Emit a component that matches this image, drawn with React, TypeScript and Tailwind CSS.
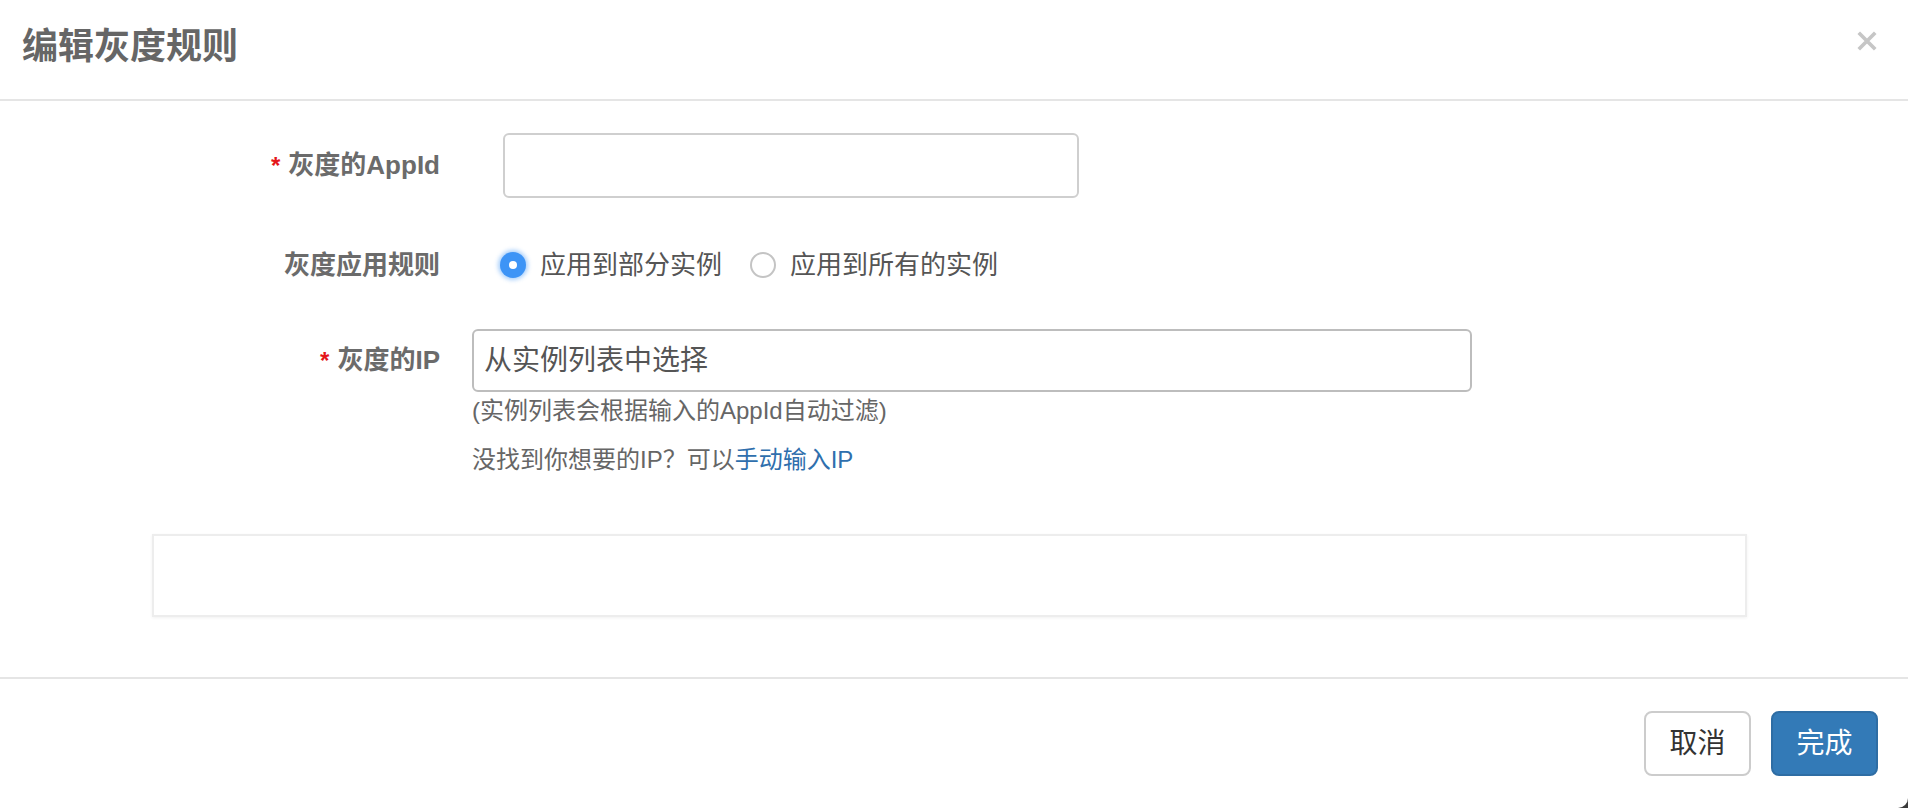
const FONT = "font-['Liberation_Sans','Noto_Sans_CJK_SC',sans-serif]";

function FieldLabel({ text, required }: { text: string; required?: boolean }) {
  return (
    <div className="flex w-[440px] shrink-0 items-center justify-end text-[26px] font-bold text-[#6b6b6b]">
      {required ? <span className="mr-[8px] text-[24px] text-[#e4161b]">*</span> : null}
      <span>{text}</span>
    </div>
  );
}

function Radio({ checked, label }: { checked?: boolean; label: string }) {
  return (
    <label className="flex items-center gap-[14px]">
      {checked ? (
        <span className="grid h-[26px] w-[26px] place-items-center rounded-full bg-[#3d94f6] shadow-[0_0_4px_2px_rgba(61,148,246,0.45)]">
          <span className="h-[8px] w-[8px] rounded-full bg-white" />
        </span>
      ) : (
        <span className="h-[26px] w-[26px] rounded-full border-2 border-[#c4c4c4] bg-white" />
      )}
      <span className="text-[26px] text-[#555]">{label}</span>
    </label>
  );
}

export default function App() {
  return (
    <div className={`h-[808px] w-[1908px] overflow-hidden bg-[#3a3a3a] ${FONT}`}>
      <div className="flex h-full w-full flex-col rounded-br-[10px] bg-white">
        {/* Header */}
        <header className="flex h-[101px] shrink-0 items-center justify-between border-b-2 border-[#e5e5e5] pl-[22px] pr-[30px]">
          <h1 className="pb-[6px] text-[36px] font-bold leading-none text-[#666]">编辑灰度规则</h1>
          <button className="mb-[18px] text-[#c6c6c6]" aria-label="关闭">
            <svg viewBox="0 0 24 24" className="h-[22px] w-[22px]" fill="none" stroke="currentColor" strokeWidth="4" strokeLinecap="butt">
              <path d="M3 3l18 18M21 3L3 21" />
            </svg>
          </button>
        </header>

        {/* Body */}
        <div className="flex h-[578px] shrink-0 flex-col border-b-2 border-[#e5e5e5]">
          <div className="mt-[32px] flex h-[65px] items-center">
            <FieldLabel text="灰度的AppId" required />
            <input className="ml-[63px] h-[65px] w-[576px] rounded-[6px] border-2 border-[#cfcfcf] bg-white px-[14px] text-[26px] outline-none" />
          </div>

          <div className="mt-[47px] flex h-[40px] items-center">
            <FieldLabel text="灰度应用规则" />
            <div className="ml-[60px] flex items-center gap-[28px]">
              <Radio checked label="应用到部分实例" />
              <Radio label="应用到所有的实例" />
            </div>
          </div>

          <div className="mt-[44px] flex items-start">
            <div className="flex h-[63px] items-center">
              <FieldLabel text="灰度的IP" required />
            </div>
            <div className="ml-[32px] flex flex-col">
              <input
                placeholder="从实例列表中选择"
                className="h-[63px] w-[1000px] rounded-[6px] border-2 border-[#bdbdbd] bg-white px-[10px] text-[28px] text-[#555] outline-none placeholder:text-[#555]"
              />
              <div className="mt-[3px] h-[32px] text-[24px] leading-[32px] text-[#666]">(实例列表会根据输入的AppId自动过滤)</div>
              <div className="mt-[17px] h-[32px] text-[24px] leading-[32px] text-[#666]">
                没找到你想要的IP？可以<a className="text-[#2f6fad]">手动输入IP</a>
              </div>
            </div>
          </div>

          <div className="ml-[152px] mt-[58px] h-[83px] w-[1595px] border-2 border-[#ededed] bg-white shadow-[0_1px_3px_rgba(0,0,0,0.06)]" />
        </div>

        {/* Footer */}
        <footer className="flex flex-1 items-start justify-end gap-[20px] pr-[30px] pt-[32px]">
          <button className="h-[65px] w-[107px] rounded-[8px] border-2 border-[#cccccc] bg-white text-[28px] text-[#333]">取消</button>
          <button className="h-[65px] w-[107px] rounded-[8px] border-2 border-[#2e6da4] bg-[#337ab7] text-[28px] text-white">完成</button>
        </footer>
      </div>
    </div>
  );
}
